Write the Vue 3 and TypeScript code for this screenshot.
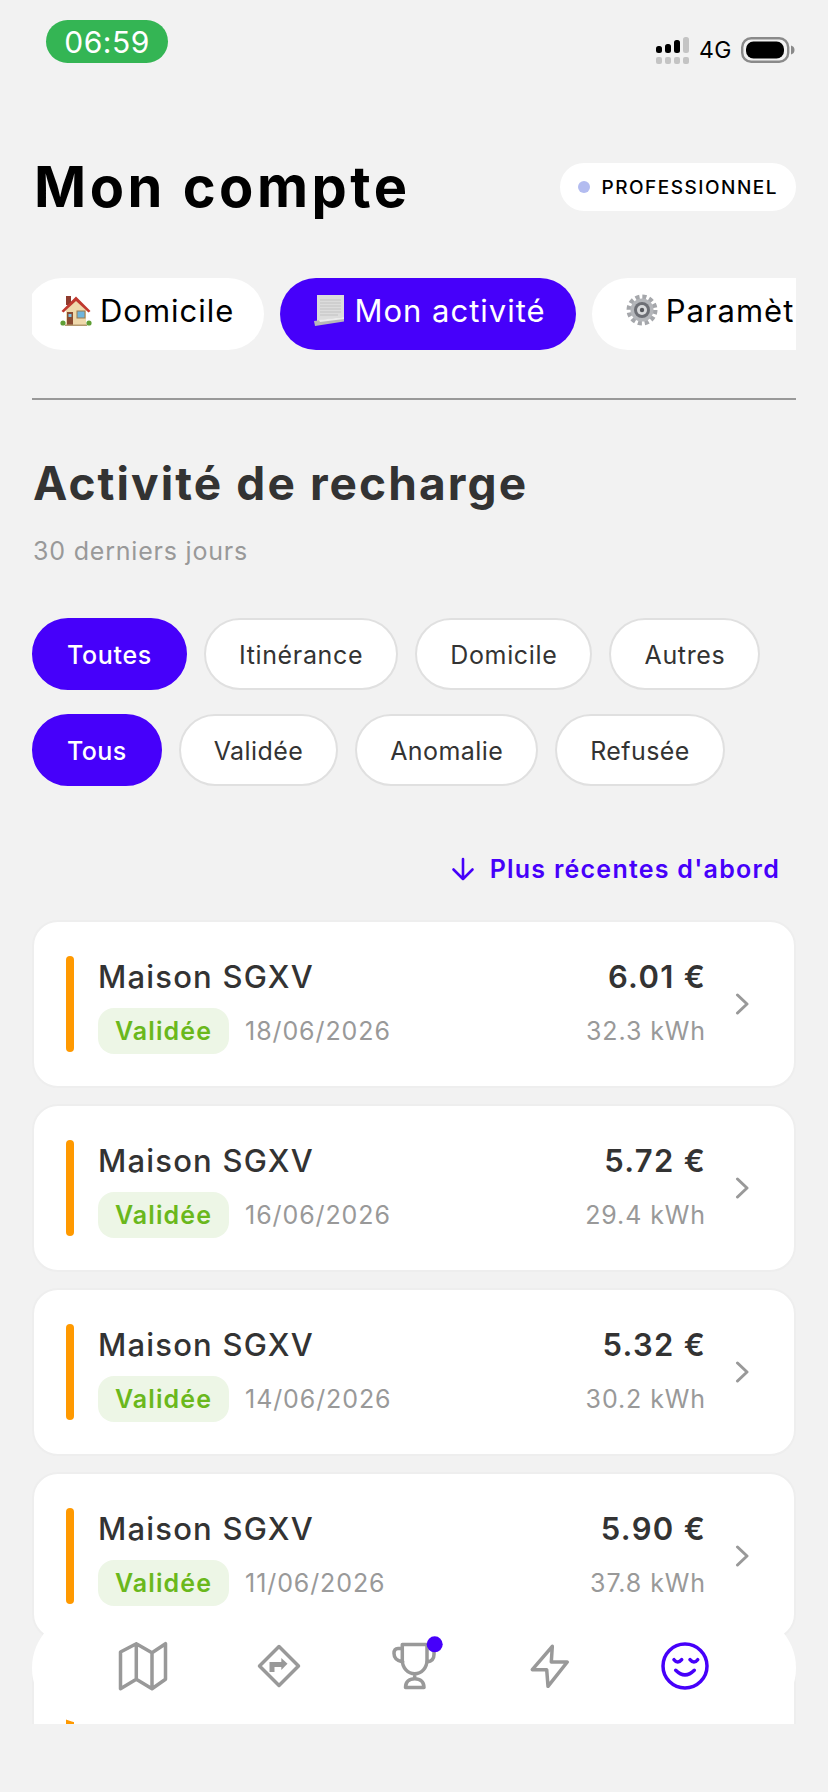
<template>
  <div class="screen">
    <div class="status-bar">
      <div class="clock">06:59</div>
      <div class="status-icons">
        <svg class="signal" width="34" height="27" viewBox="0 0 34 27">
          <rect x="0" y="9" width="6" height="7" rx="2.5" fill="#000" />
          <rect x="9" y="7" width="6" height="9" rx="2.5" fill="#000" />
          <rect x="18" y="3" width="6" height="13" rx="2.5" fill="#000" />
          <rect x="27" y="0" width="6" height="16" rx="2.5" fill="#c4c4c4" />
          <rect x="0" y="20" width="6" height="7" rx="2" fill="#c4c4c4" />
          <rect x="9" y="20" width="6" height="7" rx="2" fill="#c4c4c4" />
          <rect x="18" y="20" width="6" height="7" rx="2" fill="#c4c4c4" />
          <rect x="27" y="20" width="6" height="7" rx="2" fill="#c4c4c4" />
        </svg>
        <span class="network">4G</span>
        <svg class="battery" width="54" height="26" viewBox="0 0 54 26">
          <rect x="1.2" y="1.2" width="46" height="23.6" rx="9" fill="none" stroke="#8a8a8a" stroke-width="2.4" />
          <rect x="5" y="4.5" width="38" height="17" rx="7.5" fill="#000" />
          <path d="M50 8.5c2.4.6 3.5 2.2 3.5 4.500s-1.100 3.900-3.500 4.500z" fill="#8a8a8a" />
        </svg>
      </div>
    </div>

    <header class="top-row">
      <h1 class="page-title">Mon compte</h1>
      <div class="pro-badge"><span class="pro-dot"></span>PROFESSIONNEL</div>
    </header>

    <nav class="tabs">
      <div class="tab tab-first">
        <svg class="emoji" width="32" height="34" viewBox="0 0 32 34">
          <rect x="6" y="3" width="5" height="9" fill="#8f3b2e" />
          <path d="M6 17 16 7l10 10v15H6z" fill="#efd9ac" />
          <path d="M1.500 18 16 3.500 30.500 18l-2 1.500L16 8 3.500 19.500z" fill="#c0392f" />
          <rect x="7" y="19" width="6" height="13" fill="#8a4b32" />
          <rect x="8.500" y="21" width="3" height="3" fill="#7cc3e8" />
          <rect x="17" y="18" width="8" height="7" fill="#6fb4dc" stroke="#9c7a4e" />
          <circle cx="3" cy="30" r="2.600" fill="#5f9e35" />
          <circle cx="29" cy="30" r="2.600" fill="#5f9e35" />
          <rect x="5" y="31.500" width="22" height="1.500" fill="#b59a70" />
        </svg>
        Domicile
      </div>
      <div class="tab tab-active">
        <svg class="emoji" width="32" height="34" viewBox="0 0 32 34">
          <rect x="3" y="2" width="27" height="26" fill="#dcdcdc" />
          <path d="M6 7h21M6 10h21M6 13h21M6 16h21M6 19h21M6 22h18" stroke="#cacaca" stroke-width="1.400" />
          <path d="M0 28 30 24v4.500L1 33z" fill="#b8b8b8" />
          <path d="M5 27 30 24v2L6 29z" fill="#ececec" />
        </svg>
        Mon activité
      </div>
      <div class="tab">
        <svg class="emoji" width="32" height="34" viewBox="0 0 32 34">
          <circle cx="16" cy="17" r="13" fill="none" stroke="#a5a7ab" stroke-width="5" stroke-dasharray="4 2.800" />
          <circle cx="16" cy="17" r="11.500" fill="#b4b6ba" />
          <circle cx="16" cy="17" r="8" fill="#6d6f75" />
          <circle cx="16" cy="17" r="5" fill="#d9dadc" />
          <circle cx="16" cy="17" r="2.200" fill="#55575c" />
        </svg>
        Paramètres
      </div>
    </nav>

    <div class="divider"></div>

    <h2 class="section-title">Activité de recharge</h2>
    <p class="section-sub">30 derniers jours</p>

    <div class="chips">
      <button v-for="c in kindFilters" :key="c" class="chip" :class="{ 'chip-on': c === 'Toutes' }">{{ c }}</button>
    </div>
    <div class="chips chips-second">
      <button v-for="c in stateFilters" :key="c" class="chip" :class="{ 'chip-on': c === 'Tous' }">{{ c }}</button>
    </div>

    <div class="sort-row">
      <svg width="24" height="24" viewBox="0 0 24 24" fill="none" stroke="#4600fa" stroke-width="2.600" stroke-linecap="round" stroke-linejoin="round">
        <path d="M12 2v20M2.500 12.500 12 22l9.500-9.500" />
      </svg>
      <span>Plus récentes d'abord</span>
    </div>

    <div class="cards">
      <div v-for="s in sessions" :key="s.date" class="card">
        <span class="card-bar"></span>
        <div class="card-main">
          <div class="card-name">Maison SGXV</div>
          <div class="card-meta">
            <span class="state">Validée</span>
            <span class="muted date">{{ s.date }}</span>
          </div>
        </div>
        <div class="card-side">
          <div class="amount">{{ s.amount }} €</div>
          <div class="muted kwh">{{ s.kwh }} kWh</div>
        </div>
        <svg class="chevron" width="15" height="22" viewBox="0 0 15 22" fill="none" stroke="#999" stroke-width="3" stroke-linecap="round" stroke-linejoin="round">
          <path d="M2.500 2 12 11l-9.500 9" />
        </svg>
      </div>
      <!-- fifth card: only its edge shows under the nav -->
      <div class="card"><span class="card-bar"></span></div>
    </div>

    <div class="bottom-nav">
      <svg width="60" height="60" viewBox="0 0 60 60" class="nav-icon">
        <path d="M7.500 16 23.300 7.700 39 16.700 52.500 7.700V43.300L39 52.700 23.300 43.300 7.500 52.700ZM23.300 7.700V43.300M39 16.700V52.700" />
      </svg>
      <svg width="60" height="60" viewBox="0 0 60 60" class="nav-icon">
        <path d="M30 10.500 49.500 30 30 49.500 10.500 30Z" />
        <path d="M23 36V28.500H33" stroke-width="5" stroke-linejoin="miter" stroke-linecap="butt" />
        <path d="M32.300 22 38.500 27.700 32.300 34Z" fill="#999" stroke="none" />
      </svg>
      <svg width="60" height="60" viewBox="0 0 60 60" class="nav-icon">
        <path d="M18.300 8.500H43V24C43 32 37.500 37.700 30.700 37.700S18.300 32 18.300 24ZM18.300 12.500H14C11 12.500 10 14.500 10 17.500 10 22 13.500 25 18.800 26M43 26C47 25.500 50 23 50 18.500V14M30.700 37.700V42.700M21.500 51.500C21.500 46 25 42.700 30.700 42.700S40 46 40 51.500ZM21.500 51.500H40" />
        <circle cx="50.700" cy="8.300" r="8" fill="#4600fa" stroke="none" />
      </svg>
      <svg width="60" height="60" viewBox="0 0 60 60" class="nav-icon">
        <path d="M32.300 10.300 12.300 33.700H26.700L28 50.300 47.300 26H31.300Z" />
      </svg>
      <svg width="60" height="60" viewBox="0 0 60 60" class="nav-icon nav-icon-on">
        <circle cx="30" cy="30" r="22" />
        <path d="M19 23.700Q22.700 28.500 26.700 23.700M35 23.700Q39 28.500 42.700 23.700M20.700 34.300Q30 43.500 39.300 34.300" />
      </svg>
    </div>
  </div>
</template>

<script setup lang="ts">
type Session = { date: string; amount: string; kwh: string };

const kindFilters: string[] = ["Toutes", "Itinérance", "Domicile", "Autres"];
const stateFilters: string[] = ["Tous", "Validée", "Anomalie", "Refusée"];

const sessions: Session[] = [
  { date: "18/06/2026", amount: "6.01", kwh: "32.3" },
  { date: "16/06/2026", amount: "5.72", kwh: "29.4" },
  { date: "14/06/2026", amount: "5.32", kwh: "30.2" },
  { date: "11/06/2026", amount: "5.90", kwh: "37.8" },
];
</script>

<style>
html,
body {
  margin: 0;
  padding: 0;
  background: #f2f2f2;
}
</style>

<style scoped>
.screen {
  position: relative;
  width: 828px;
  height: 1792px;
  overflow: hidden;
  background: #f2f2f2;
  font-family: Inter, "Liberation Sans", sans-serif;
  color: #333;
}

.status-bar {
  display: flex;
  justify-content: space-between;
  padding: 20px 33px 0 46px;
  height: 43px;
}
.clock {
  width: 122px;
  height: 43px;
  border-radius: 22px;
  background: #34b554;
  color: #fff;
  font-size: 30px;
  line-height: 44px;
  letter-spacing: 0.5px;
  text-align: center;
}
.status-icons {
  display: flex;
  align-items: center;
  margin-top: 17px;
  height: 26px;
}
.signal {
  margin-right: 9px;
}
.network {
  font-size: 23px;
  letter-spacing: 0.5px;
  color: #000;
  margin-right: 9px;
}

.top-row {
  display: flex;
  justify-content: space-between;
  align-items: center;
  margin: 100px 32px 0;
  height: 48px;
}
.page-title {
  margin: 0 0 0 2px;
  font-size: 56px;
  font-weight: 700;
  line-height: 48px;
  color: #000;
  letter-spacing: 3.5px;
}
.pro-badge {
  display: flex;
  align-items: center;
  height: 48px;
  padding: 0 18px;
  background: #fff;
  border-radius: 24px;
  font-size: 19px;
  font-weight: 500;
  letter-spacing: 1.5px;
  color: #000;
}
.pro-dot {
  width: 12px;
  height: 12px;
  border-radius: 50%;
  background: #b3bcf0;
  margin-right: 12px;
}

.tabs {
  display: flex;
  gap: 16px;
  margin: 67px 32px 0;
  height: 72px;
  overflow: hidden;
}
.tab {
  display: flex;
  align-items: center;
  flex-shrink: 0;
  gap: 8px;
  height: 72px;
  padding: 0 30px 8px 34px;
  box-sizing: border-box;
  background: #fff;
  border-radius: 36px;
  font-size: 31px;
  letter-spacing: 1px;
  color: #000;
}
.tab-first {
  margin-left: -6px;
}
.tab-active {
  background: #4600fa;
  color: #fff;
}
.emoji {
  flex-shrink: 0;
}

.divider {
  margin: 48px 32px 0;
  height: 2px;
  background: #999;
}

.section-title {
  margin: 55px 33px 0;
  font-size: 46px;
  font-weight: 700;
  line-height: 56px;
  letter-spacing: 2.1px;
  color: #333;
}
.section-sub {
  margin: 22px 33px 0;
  font-size: 25px;
  line-height: 36px;
  letter-spacing: 0.8px;
  color: #999;
}

.chips {
  display: flex;
  gap: 17px;
  margin: 49px 32px 0;
}
.chips-second {
  margin-top: 24px;
}
.chip {
  height: 72px;
  padding: 2px 33px 0;
  box-sizing: border-box;
  border: 2px solid #e0e0e0;
  border-radius: 36px;
  background: #fff;
  font-family: inherit;
  font-size: 25px;
  letter-spacing: 0.66px;
  color: #333;
}
.chips-second .chip {
  letter-spacing: 0.42px;
}
.chip-on {
  border-color: #4600fa;
  background: #4600fa;
  color: #fff;
  font-weight: 500;
}

.sort-row {
  display: flex;
  align-items: center;
  justify-content: flex-end;
  gap: 15px;
  margin: 65px 48px 0 0;
  height: 36px;
  font-size: 25px;
  font-weight: 600;
  letter-spacing: 1.25px;
  color: #4600fa;
}

.cards {
  display: flex;
  flex-direction: column;
  gap: 16px;
  height: 804px;
  margin: 33px 32px 0;
  overflow: hidden;
}
.card {
  display: flex;
  align-items: center;
  flex-shrink: 0;
  height: 168px;
  box-sizing: border-box;
  padding: 0 44px 0 32px;
  background: #fff;
  border: 2px solid #eeeeee;
  border-radius: 26px;
}
.card-bar {
  width: 8px;
  height: 96px;
  border-radius: 4px;
  background: #ff9900;
  margin-right: 24px;
}
.card-main {
  flex: 1;
  padding-top: 2px;
}
.card-name {
  position: relative;
  top: 1px;
  font-size: 31px;
  font-weight: 500;
  line-height: 40px;
  letter-spacing: 1.2px;
}
.card-meta {
  display: flex;
  align-items: center;
  margin-top: 12px;
}
.state {
  height: 46px;
  padding: 0 17px;
  border-radius: 16px;
  background: #edf6e6;
  color: #6ab81c;
  font-size: 25px;
  font-weight: 600;
  line-height: 46px;
  letter-spacing: 1.1px;
}
.muted {
  color: #999;
  font-size: 25px;
  letter-spacing: 0.9px;
}
.date {
  margin-left: 16px;
}
.card-side {
  text-align: right;
  margin-right: 29px;
  padding-top: 2px;
}
.amount {
  position: relative;
  top: 1px;
  font-size: 31px;
  font-weight: 600;
  line-height: 40px;
  letter-spacing: 1.3px;
}
.kwh {
  margin-top: 12px;
  line-height: 46px;
}
.chevron {
  flex-shrink: 0;
}

.bottom-nav {
  position: absolute;
  left: 32px;
  top: 1612px;
  width: 764px;
  height: 112px;
  box-sizing: border-box;
  padding-bottom: 4px;
  border-radius: 56px;
  background: #fff;
  display: grid;
  grid-template-columns: repeat(5, 135.5px);
  justify-content: center;
  justify-items: center;
  align-items: center;
}
.nav-icon {
  fill: none;
  stroke: #999;
  stroke-width: 3.5;
  stroke-linecap: round;
  stroke-linejoin: round;
}
.nav-icon-on {
  stroke: #4600fa;
}
</style>
